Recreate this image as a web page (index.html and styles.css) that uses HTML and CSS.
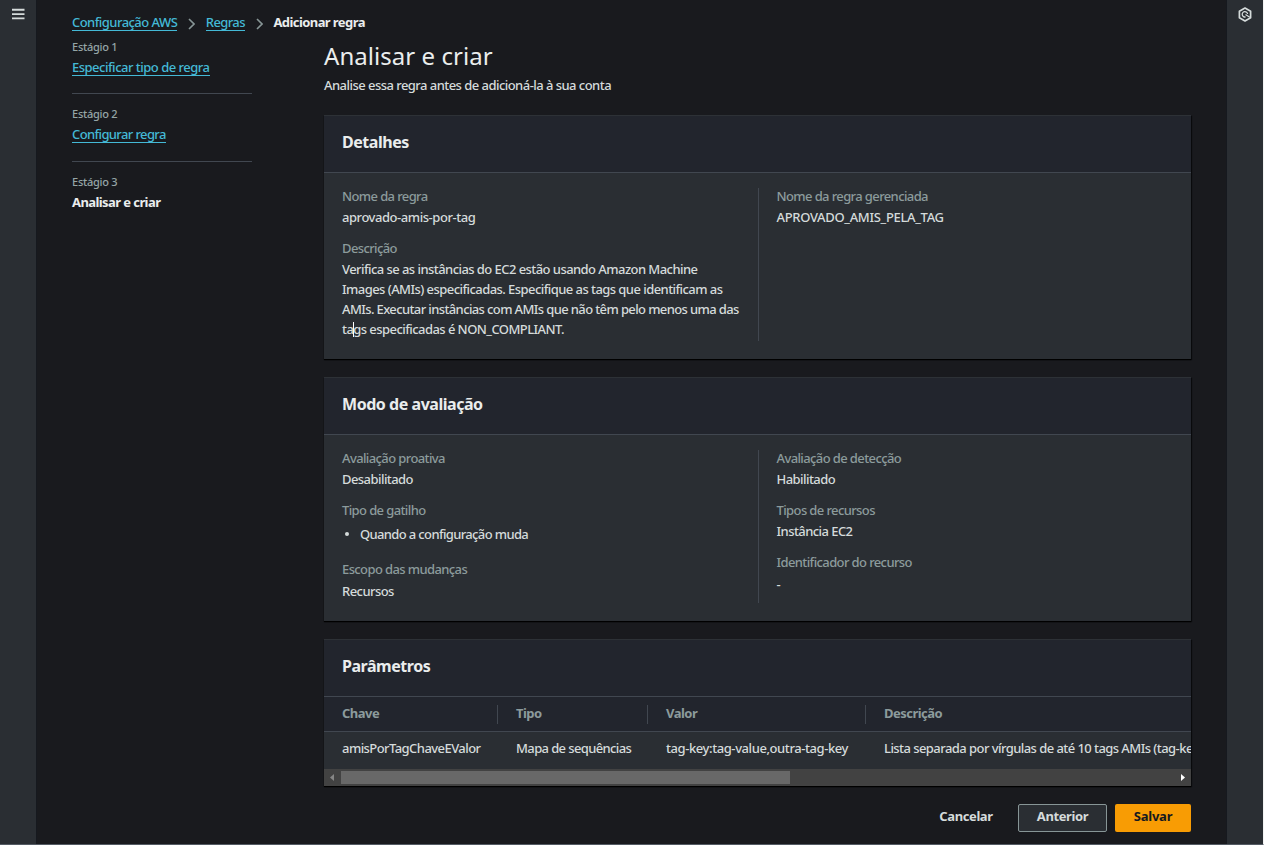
FILE: index.html
```html
<!DOCTYPE html>
<html lang="pt-BR">
<head>
<meta charset="utf-8">
<title>Adicionar regra</title>
<link rel="stylesheet" href="styles.css">
</head>
<body>
<div class="app">
  <aside class="rail rail-left">
    <svg class="icon-menu" width="13" height="12" viewBox="0 0 13 12"><path d="M0 1.800h12.500M0 6.100h12.500M0 10.400h12.500" stroke="#d5dbdb" stroke-width="1.900"/></svg>
  </aside>
  <main class="main">
    <nav class="crumbs">
      <a class="link c1">Configuração AWS</a>
      <svg class="chev" width="7" height="12" viewBox="0 0 7 12"><path d="M1 1l5 5-5 5" fill="none" stroke="#879596" stroke-width="1.600"/></svg>
      <a class="link c2">Regras</a>
      <svg class="chev" width="7" height="12" viewBox="0 0 7 12"><path d="M1 1l5 5-5 5" fill="none" stroke="#879596" stroke-width="1.600"/></svg>
      <span class="current">Adicionar regra</span>
    </nav>
    <div class="columns">
      <ol class="steps">
        <li class="step"><div class="stage">Estágio 1</div><a class="link">Especificar tipo de regra</a></li>
        <li class="step"><div class="stage">Estágio 2</div><a class="link c3">Configurar regra</a></li>
        <li class="step"><div class="stage">Estágio 3</div><span class="current">Analisar e criar</span></li>
      </ol>
      <div class="content">
        <h1 class="title">Analisar e criar</h1>
        <p class="subtitle">Analise essa regra antes de adicioná-la à sua conta</p>

        <section class="card">
          <h2 class="card-head">Detalhes</h2>
          <div class="pairs">
            <dl class="col">
              <dt>Nome da regra</dt><dd class="name">aprovado-amis-por-tag</dd>
              <dt>Descrição</dt>
              <dd class="desc">Verifica se as instâncias do EC2 estão usando Amazon Machine<br>Images (AMIs) especificadas. Especifique as tags que identificam as<br><span class="tight">AMIs. Executar instâncias com AMIs que não têm pelo menos uma das</span><br>ta<span class="caret"></span>gs especificadas é NON_COMPLIANT.</dd>
            </dl>
            <dl class="col">
              <dt>Nome da regra gerenciada</dt><dd class="caps">APROVADO_AMIS_PELA_TAG</dd>
            </dl>
          </div>
        </section>

        <section class="card">
          <h2 class="card-head">Modo de avaliação</h2>
          <div class="pairs">
            <dl class="col">
              <dt>Avaliação proativa</dt><dd>Desabilitado</dd>
              <dt>Tipo de gatilho</dt><dd class="bullet">Quando a configuração muda</dd>
              <dt>Escopo das mudanças</dt><dd class="low">Recursos</dd>
            </dl>
            <dl class="col">
              <dt>Avaliação de detecção</dt><dd>Habilitado</dd>
              <dt>Tipos de recursos</dt><dd>Instância EC2</dd>
              <dt>Identificador do recurso</dt><dd class="low">-</dd>
            </dl>
          </div>
        </section>

        <section class="card">
          <h2 class="card-head">Parâmetros</h2>
          <div class="table">
            <div class="row head"><span>Chave</span><span>Tipo</span><span>Valor</span><span>Descrição</span></div>
            <div class="row"><span>amisPorTagChaveEValor</span><span class="tight">Mapa de sequências</span><span class="tags">tag-key:tag-value,outra-tag-key</span><span>Lista separada por vírgulas de até 10 tags AMIs (tag-key</span></div>
          </div>
          <div class="scroll">
            <svg width="17" height="17" viewBox="0 0 17 17"><path d="M10 5v7L6 8.5z" fill="#868686"/></svg>
            <div class="thumb"></div>
            <svg width="17" height="17" viewBox="0 0 17 17"><path d="M7 5v7l4-3.5z" fill="#fff"/></svg>
          </div>
        </section>

        <div class="actions">
          <button class="btn plain">Cancelar</button>
          <button class="btn normal">Anterior</button>
          <button class="btn primary">Salvar</button>
        </div>
      </div>
    </div>
  </main>
  <aside class="rail rail-right">
    <svg class="icon-hex" width="14" height="15" viewBox="0 0 14 15"><path d="M7 1l5.600 3.200v6.500L7 13.900 1.400 10.700V4.200z" fill="none" stroke="#d5dbdb" stroke-width="1.700" stroke-linejoin="round"/><path d="M9.600 7A2.700 2.700 0 1 0 7.600 9.900M7.500 7.500l4.300 2.700" fill="none" stroke="#d5dbdb" stroke-width="1.300"/></svg>
  </aside>
</div>
</body>
</html>
```
FILE: styles.css
```css
* { box-sizing: border-box; }
body {
  margin: 0;
  background: #191a1e;
  color: #d5dbdb;
  font: 500 13px/20px "Noto Sans", "Open Sans", sans-serif;
  letter-spacing: -0.56px;
}
.app {
  display: flex;
  height: 845px;
  overflow: hidden;
  border-right: 1px solid #f2f3f3;
  border-bottom: 1px solid #545b64;
}
.rail { flex: none; background: #2a2e33; }
.rail-left { width: 37px; padding: 8px 0 0 12px; border-right: 1px solid #16191f; }
.rail-right { width: 37px; padding: 7px 0 0 11px; border-left: 1px solid #16191f; }
.rail svg { display: block; }
.main { flex: 1; min-width: 0; padding: 12px 35px 0; }

.crumbs { display: flex; height: 20px; white-space: nowrap; }
.chev { margin: 6px 10.5px 0 11px; flex: none; }
.link { display: inline-block; height: 19px; color: #44b9d6; border-bottom: 1px solid #44b9d6; white-space: nowrap; letter-spacing: -0.5px; }
.c1 { letter-spacing: -0.54px; }
.c2 { letter-spacing: -0.6px; }
.c3 { letter-spacing: -0.62px; }
.current { font-weight: 700; color: #eaeded; letter-spacing: -0.58px; }

.columns { display: flex; }
.steps { width: 180px; margin: 7px 72px 0 0; padding: 0; list-style: none; flex: none; }
.step { height: 68px; }
.step:first-child { height: 54px; }
.stage { font-size: 11px; line-height: 16px; color: #95a5a6; margin-bottom: 2px; letter-spacing: -0.25px; }
.step + .step .stage { border-top: 1px solid #414750; padding-top: 12px; }

.content { flex: 1; min-width: 0; }
.title { margin: 8px 0 3px; font-size: 24px; line-height: 32px; font-weight: 400; color: #eaeded; letter-spacing: 0.05px; }
.subtitle { margin: 0 0 20px; letter-spacing: -0.54px; }

.card { margin-bottom: 18px; background: #2a2e33; box-shadow: 0 1px 1px #000, 1px 1px 1px rgba(0,0,0,.5); }
.card-head {
  margin: 0;
  height: 58px;
  padding: 16px 18px 0;
  background: #22252d;
  border-top: 1px solid #2d3136;
  border-bottom: 1px solid #414750;
  font-size: 16px;
  line-height: 20px;
  color: #eaeded;
  letter-spacing: -0.46px;
}
.pairs { display: grid; grid-template-columns: 434px 1fr; padding: 15px 0 18px; }
.col { margin: 0; padding-left: 18px; min-height: 153px; white-space: nowrap; }
.col + .col { border-left: 1px solid #414750; padding-left: 17.5px; }
.col dt { line-height: 16px; margin-bottom: 3px; color: #8c9b9c; letter-spacing: -0.61px; }
.col dd { margin: 0 0 13px; }
.col .low { margin: 4px 0 0; }
.col .desc { margin: 0; }
.col .name { letter-spacing: -0.45px; }
.col .caps { letter-spacing: -0.32px; }
.tight { letter-spacing: -0.62px; }
.tags { letter-spacing: -0.42px; }
.col .bullet { display: flex; align-items: center; padding: 3px 0 4px; letter-spacing: -0.64px; }
.bullet::before { content: ""; width: 4px; height: 4px; margin: 0 11px 0 3px; border-radius: 2px; background: #d5dbdb; }
.caret { display: inline-block; width: 1px; height: 15px; margin-right: -1px; vertical-align: -3px; background: #fff; }

.table { overflow: hidden; }
.row { display: grid; grid-template-columns: 174px 150px 218px 325px; height: 37px; padding-top: 6px; white-space: nowrap; }
.row span { padding-left: 18px; overflow: hidden; }
.head { height: 35px; background: #22252d; border-bottom: 1px solid #414750; color: #8c9b9c; font-weight: 700; }
.head span { height: 19px; margin-top: 2px; line-height: 17px; border-right: 1px solid #414750; letter-spacing: -0.52px; }
.head span:last-child { border: 0; }
.scroll { display: flex; width: 100%; height: 17px; background: #424242; }
.thumb { width: 449px; height: 13px; margin: 2px auto 0 0; background: #686868; }

.actions { display: flex; justify-content: flex-end; }
.btn { height: 28px; padding: 0 0 4px; border: 1px solid transparent; border-radius: 2px; background: none; color: #d5dbdb; font: 700 13px/20px "Noto Sans", sans-serif; letter-spacing: -0.4px; }
.plain { width: 90px; margin-right: 7px; }
.normal { width: 89px; margin-right: 8px; background: #2a2e33; border-color: #879596; }
.primary { width: 76px; background: #f89c04; color: #16191f; letter-spacing: -0.2px; }
```
